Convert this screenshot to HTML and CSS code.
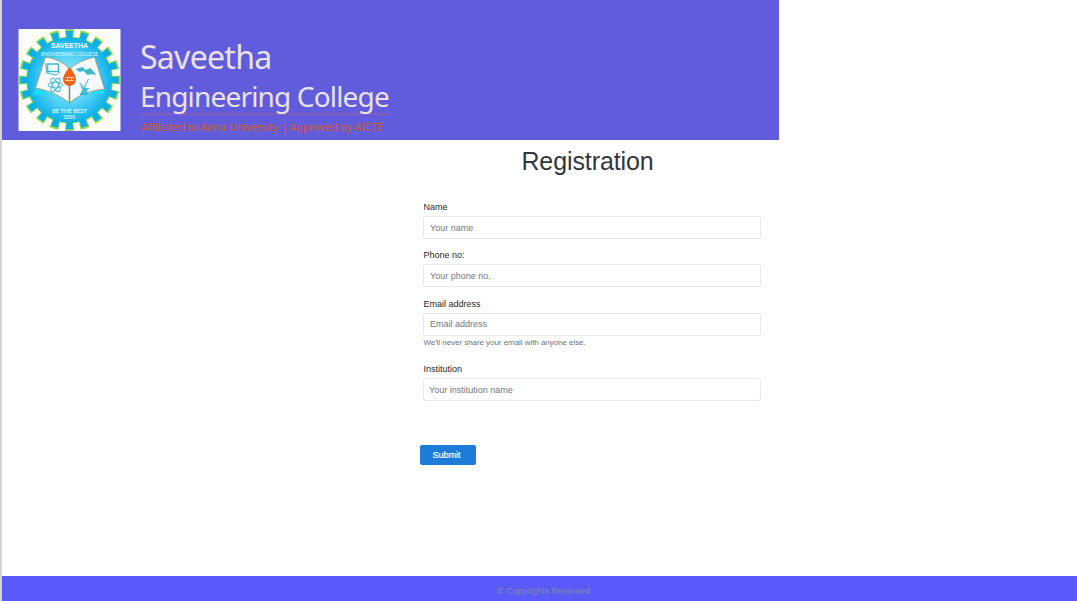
FILE: index.html
```html
<!DOCTYPE html>
<html lang="en">
<head>
<meta charset="utf-8">
<title>Registration</title>
<link rel="stylesheet" href="styles.css">
</head>
<body>
<header class="banner">
  <svg class="logo" viewBox="0 0 102 102">
    <defs>
      <radialGradient id="sky"><stop offset="0" stop-color="#b5ecfb"/><stop offset=".6" stop-color="#4fd0f6"/><stop offset="1" stop-color="#0fb0ea"/></radialGradient>
    </defs>
    <rect width="102" height="102" fill="#fcfdfb"/>
    <g transform="translate(51 51)">
      <g fill="none" transform="rotate(-4.5)">
        <circle r="46" pathLength="400" stroke="#8fdc4c" stroke-width="10" stroke-dasharray="11.6 8.4" stroke-dashoffset="0.8"/>
        <circle r="42" stroke="#8fdc4c" stroke-width="3"/>
        <circle r="45" pathLength="400" stroke="#0daee8" stroke-width="8.400" stroke-dasharray="9 11" stroke-dashoffset="-0.5"/>
      </g>
      <circle r="42.500" fill="url(#sky)"/>
    </g>
    <path d="M17 60l34 12 34-12v5Q65 62 51 75 34 62 15 66z" fill="#10e6f5"/>
    <path d="M27 28Q42 30 51 40 60 32 76 28L86 60Q64 62 51 74 36 62 17 59z" fill="#f8fbfb" stroke="#9c9b72" stroke-width=".8"/>
    <path d="M51 40v34" stroke="#8b8768" stroke-width="1.6"/>
    <g fill="none" stroke="#3fb9ce" stroke-width="1">
      <path d="M29 35h11v7.500H29z" stroke-width="1.600"/><path d="M27 34l1 10 10 2 3-3"/>
      <ellipse cx="37" cy="56" rx="7.500" ry="2.800"/><ellipse cx="37" cy="56" rx="7.500" ry="2.800" transform="rotate(60 37 56)"/><ellipse cx="37" cy="56" rx="7.500" ry="2.800" transform="rotate(120 37 56)"/>
      <path d="M61 54l9 7M66 58l4-8M62 66l4-7 4 7"/>
    </g>
    <path d="M57 40l7-2 3 3 5-2 6 7-5-1-4 1-4-4-4 1zM60 53q4 8 12 6l-5 3 3 4h-9l3-5z" fill="#3fb9ce"/>
    <path d="M51 38Q57.500 46 57.500 50.500a6.500 6.500 0 0 1-13 0Q44.500 46 51 38z" fill="#ee6417"/>
    <path d="M46.500 48.500h9M46.500 51.500h9M49 48.500v3M53 48.500v3" stroke="#ffd9c0" stroke-width=".9"/>
    <g class="seal-text" text-anchor="middle">
      <text class="seal-name" x="51" y="19" font-size="6.300" textLength="37" lengthAdjust="spacingAndGlyphs">SAVEETHA</text>
      <text class="seal-thin" x="51" y="26.500" font-size="5.200" textLength="57" lengthAdjust="spacingAndGlyphs">ENGINEERING COLLEGE</text>
      <text x="51" y="84" font-size="5" textLength="35" lengthAdjust="spacingAndGlyphs">BE THE BEST</text>
      <text x="51" y="90" font-size="5" textLength="12">2001</text>
    </g>
  </svg>
  <div class="brand">
    <div class="brand-name">Saveetha</div>
    <div class="brand-sub">Engineering College</div>
    <div class="brand-note">Affiliated to Anna University | Approved by AICTE</div>
  </div>
</header>
<main class="content">
  <h1 class="title">Registration</h1>
  <form class="form">
    <div class="field"><label for="name">Name</label><input id="name" placeholder="Your name"></div>
    <div class="field"><label for="phone">Phone no:</label><input id="phone" placeholder="Your phone no."></div>
    <div class="field field-email"><label for="email">Email address</label><input id="email" placeholder="Email address"><small>We'll never share your email with anyone else.</small></div>
    <div class="field"><label for="inst">Institution</label><input id="inst" class="input-inst" placeholder="Your institution name"></div>
    <button class="submit" type="button">Submit</button>
  </form>
</main>
<footer class="footer">© Copyrights Reserved</footer>
</body>
</html>
```
FILE: styles.css
```css
* { box-sizing: border-box; }
body {
  margin: 0;
  height: 601px;
  overflow: hidden;
  border-left: 2px solid #d5d5d5;
  display: flex;
  flex-direction: column;
  background: #fff;
  font-family: "Liberation Sans", Arial, sans-serif;
}
.banner {
  flex: none;
  display: flex;
  width: 777px;
  height: 140px;
  padding: 29px 0 0 16px;
  background: #605cdb;
}
.logo { flex: none; width: 103px; height: 102px; }
.seal-text { font-family: "Lato", sans-serif; font-weight: 700; fill: #d9fbff; }
.seal-name { font-family: "Liberation Sans", sans-serif; fill: #f2feff; }
.seal-thin { font-weight: 400; }
.brand {
  width: 250px;
  margin-left: 19px;
  padding-top: 6px;
  color: #ebe2e8;
  font-family: "Noto Sans", "Open Sans", sans-serif;
  white-space: nowrap;
}
.brand-name { height: 42px; font-size: 32px; line-height: 44px; letter-spacing: -0.7px; }
.brand-sub {
  height: 38px;
  border-bottom: 2px solid #835dba;
  font-size: 28px;
  line-height: 38px;
  letter-spacing: -0.83px;
}
.brand-note {
  height: 22px;
  padding-left: 1px;
  color: #cf5b2b;
  font-size: 11px;
  line-height: 23px;
  letter-spacing: -0.23px;
}
.content { flex: 1; padding: 6px 0 0 418px; }
.title {
  width: 335px;
  margin: 0;
  text-align: center;
  color: #33373b;
  font-size: 25px;
  font-weight: 400;
  line-height: 30px;
  letter-spacing: -0.1px;
}
.form { width: 342px; padding: 24px 0 0 3.400px; color: #24282c; font-size: 9px; }
.field { display: flex; flex-direction: column; height: 48.300px; }
.field-email { height: 65.600px; }
.field label { height: 16px; line-height: 15px; }
.field input {
  width: 338px;
  height: 23px;
  margin-left: -0.400px;
  padding: 0 6px;
  border: 1px solid #e6e8ea;
  border-radius: 2.500px;
  background: #fff;
  font: 9px "Liberation Sans", Arial, sans-serif;
}
.field .input-inst { padding-left: 5px; }
.field input::placeholder { color: #707981; opacity: 1; }
.field small { font-size: 8px; line-height: 13px; color: #6c757d; letter-spacing: -0.05px; }
.submit {
  display: block;
  width: 56px;
  height: 20px;
  margin: 35px 0 0 -3.400px;
  padding: 0 3px 0 0;
  border: 0;
  border-radius: 2px;
  background: #1c7cd8;
  color: #fff;
  font: 9px "Liberation Sans", Arial, sans-serif;
  -webkit-text-stroke: 0.2px #fff;
}
.footer {
  flex: none;
  height: 25px;
  padding-left: 8px;
  background: #5a5afb;
  color: #8286ac;
  font-size: 9px;
  line-height: 30px;
  text-align: center;
}
```
